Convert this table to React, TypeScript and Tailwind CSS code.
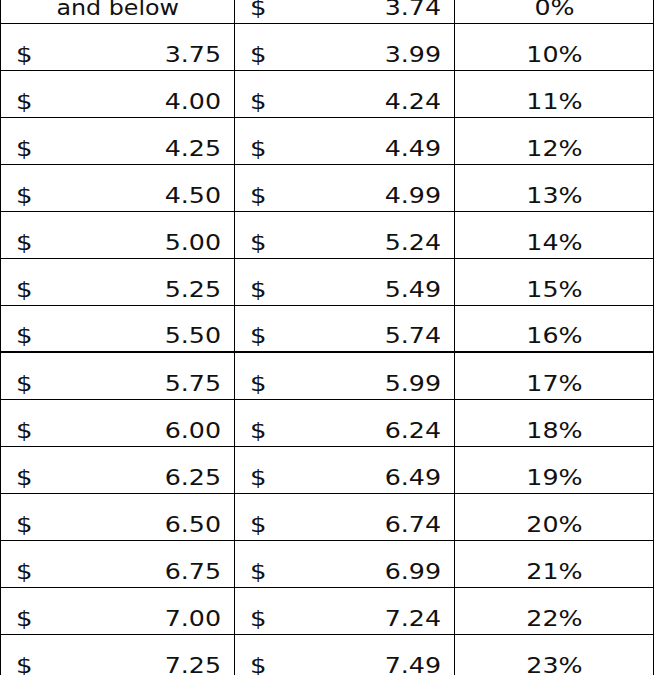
const rows: [string, string, string][] = [
  ['3.75', '3.99', '10%'],
  ['4.00', '4.24', '11%'],
  ['4.25', '4.49', '12%'],
  ['4.50', '4.99', '13%'],
  ['5.00', '5.24', '14%'],
  ['5.25', '5.49', '15%'],
  ['5.50', '5.74', '16%'],
  ['5.75', '5.99', '17%'],
  ['6.00', '6.24', '18%'],
  ['6.25', '6.49', '19%'],
  ['6.50', '6.74', '20%'],
  ['6.75', '6.99', '21%'],
  ['7.00', '7.24', '22%'],
  ['7.25', '7.49', '23%'],
];

function Money({ value, wide }: { value: string; wide: boolean }) {
  return (
    <div
      className={
        'flex items-end justify-between pb-[4px] pl-[15px] pr-[13px] border-r border-black ' +
        (wide ? 'w-[234px]' : 'w-[220px]')
      }
    >
      <span className="inline-block origin-left scale-x-[1.18]">$</span>
      <span className="inline-block origin-right scale-x-[1.15]">{value}</span>
    </div>
  );
}

function Pct({ value }: { value: string }) {
  return (
    <div className="w-[199px] flex items-end justify-center pb-[4px] border-r border-black">
      <span className="inline-block origin-center scale-x-[1.15]">{value}</span>
    </div>
  );
}

export default function App() {
  return (
    <div
      className="h-screen overflow-hidden bg-white text-[#111] text-[22px] leading-[22px]"
      style={{ fontFamily: '"DejaVu Sans", Verdana, sans-serif' }}
    >
      <div className="w-[654px] -mt-[23px] border-l border-black">
        {/* header row, cut off at the top */}
        <div className="flex h-[47px] border-b border-black">
          <div className="w-[234px] flex items-end justify-center pb-[4px] border-r border-black">
            <span className="inline-block origin-center scale-x-[1.08]">and below</span>
          </div>
          <Money value="3.74" wide={false} />
          <Pct value="0%" />
        </div>

        {rows.map(([from, to, pct], i) => (
          <div
            key={from}
            className={'flex h-[47px] border-black ' + (i === 6 ? 'border-b-2' : 'border-b')}
          >
            <Money value={from} wide={true} />
            <Money value={to} wide={false} />
            <Pct value={pct} />
          </div>
        ))}
      </div>
    </div>
  );
}
